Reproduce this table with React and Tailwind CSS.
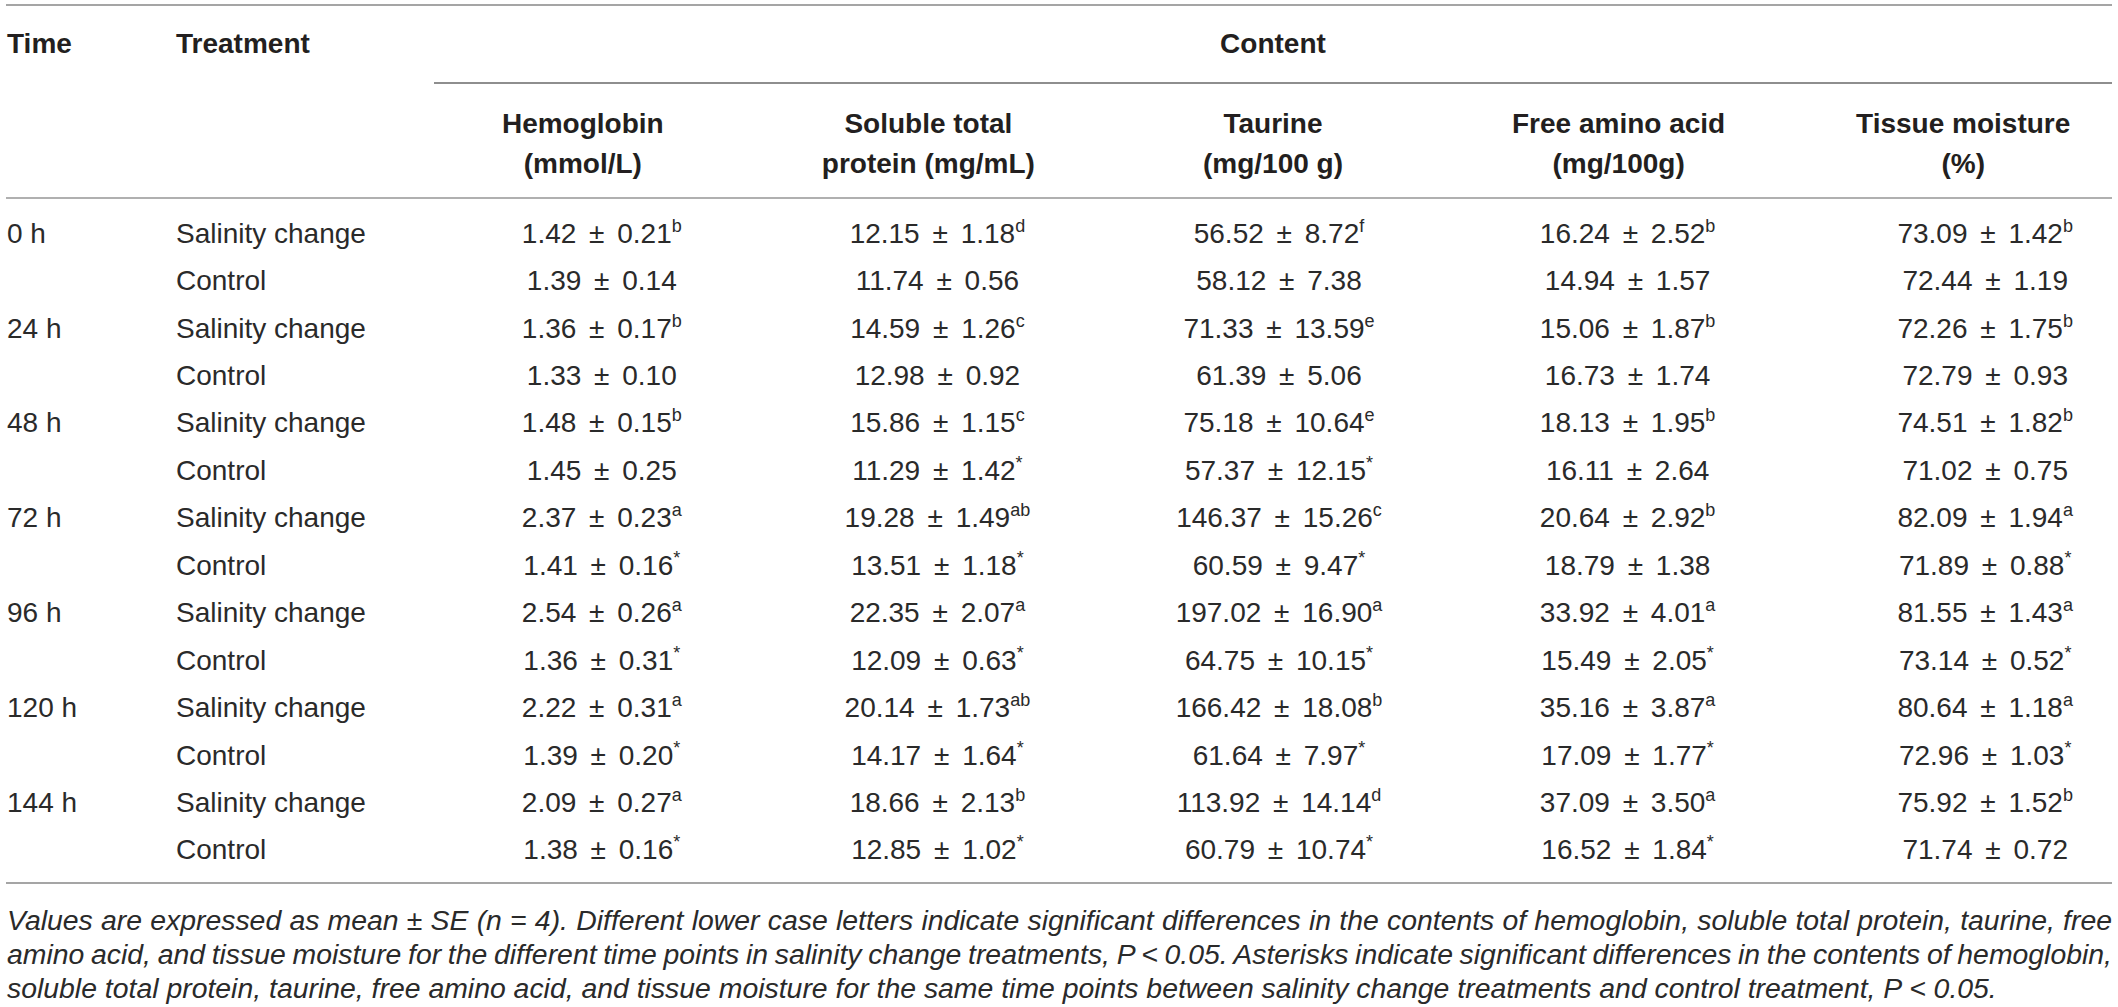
import React from 'react';

const heads = [
  ['Hemoglobin', '(mmol/L)'],
  ['Soluble total', 'protein (mg/mL)'],
  ['Taurine', '(mg/100 g)'],
  ['Free amino acid', '(mg/100g)'],
  ['Tissue moisture', '(%)'],
];

// header and data sit a little off the column centre in the source table
const headShift = ['pr-[38px]', 'pr-[18px]', '', 'pl-[20px]', 'pl-[38px]'];
const cellShift = ['', '', 'pl-[12px]', 'pl-[38px]', 'pl-[82px]'];

const rows = [
  ['0 h', 'Salinity change', '1.42 ± 0.21|b', '12.15 ± 1.18|d', '56.52 ± 8.72|f', '16.24 ± 2.52|b', '73.09 ± 1.42|b'],
  ['', 'Control', '1.39 ± 0.14', '11.74 ± 0.56', '58.12 ± 7.38', '14.94 ± 1.57', '72.44 ± 1.19'],
  ['24 h', 'Salinity change', '1.36 ± 0.17|b', '14.59 ± 1.26|c', '71.33 ± 13.59|e', '15.06 ± 1.87|b', '72.26 ± 1.75|b'],
  ['', 'Control', '1.33 ± 0.10', '12.98 ± 0.92', '61.39 ± 5.06', '16.73 ± 1.74', '72.79 ± 0.93'],
  ['48 h', 'Salinity change', '1.48 ± 0.15|b', '15.86 ± 1.15|c', '75.18 ± 10.64|e', '18.13 ± 1.95|b', '74.51 ± 1.82|b'],
  ['', 'Control', '1.45 ± 0.25', '11.29 ± 1.42|*', '57.37 ± 12.15|*', '16.11 ± 2.64', '71.02 ± 0.75'],
  ['72 h', 'Salinity change', '2.37 ± 0.23|a', '19.28 ± 1.49|ab', '146.37 ± 15.26|c', '20.64 ± 2.92|b', '82.09 ± 1.94|a'],
  ['', 'Control', '1.41 ± 0.16|*', '13.51 ± 1.18|*', '60.59 ± 9.47|*', '18.79 ± 1.38', '71.89 ± 0.88|*'],
  ['96 h', 'Salinity change', '2.54 ± 0.26|a', '22.35 ± 2.07|a', '197.02 ± 16.90|a', '33.92 ± 4.01|a', '81.55 ± 1.43|a'],
  ['', 'Control', '1.36 ± 0.31|*', '12.09 ± 0.63|*', '64.75 ± 10.15|*', '15.49 ± 2.05|*', '73.14 ± 0.52|*'],
  ['120 h', 'Salinity change', '2.22 ± 0.31|a', '20.14 ± 1.73|ab', '166.42 ± 18.08|b', '35.16 ± 3.87|a', '80.64 ± 1.18|a'],
  ['', 'Control', '1.39 ± 0.20|*', '14.17 ± 1.64|*', '61.64 ± 7.97|*', '17.09 ± 1.77|*', '72.96 ± 1.03|*'],
  ['144 h', 'Salinity change', '2.09 ± 0.27|a', '18.66 ± 2.13|b', '113.92 ± 14.14|d', '37.09 ± 3.50|a', '75.92 ± 1.52|b'],
  ['', 'Control', '1.38 ± 0.16|*', '12.85 ± 1.02|*', '60.79 ± 10.74|*', '16.52 ± 1.84|*', '71.74 ± 0.72'],
];

const grid = 'grid grid-cols-[170px_258px_repeat(5,minmax(0,1fr))]';

const Value = ({ text }) => {
  const [num, mark] = text.split('|');
  const [a, b] = num.split(' ± ');
  return (
    <span>
      {a} <span className="px-[5px]">±</span> {b}
      {mark && <sup className="text-[18px] -top-[11px]">{mark}</sup>}
    </span>
  );
};

export default function App() {
  return (
    <div className="w-[2118px] h-[1007px] bg-white px-[6px] font-['Liberation_Sans',Arial,sans-serif] text-[#231f20] overflow-hidden">
      <div className="h-[4px]" />
      <div className="h-[2px] bg-[#a5a5a5]" />

      {/* header */}
      <div className={`${grid} h-[76px] items-center text-[28px] font-bold`}>
        <div className="pl-[1px]">Time</div>
        <div>Treatment</div>
        <div className="col-span-5 text-center">Content</div>
      </div>
      <div className={grid}>
        <div className="col-start-3 col-span-5 h-[2px] bg-[#8e8e8e]" />
      </div>
      <div className={`${grid} h-[113px] pt-[20px] text-[28px] font-bold leading-[40px]`}>
        <div />
        <div />
        {heads.map((h, i) => (
          <div key={i} className={`text-center ${headShift[i]}`}>
            <div>{h[0]}</div>
            <div>{h[1]}</div>
          </div>
        ))}
      </div>
      <div className="h-[2px] bg-[#b0b0b0]" />

      {/* body */}
      <div className="pt-[11px] pb-[8px] text-[28px] text-[#2a2a2a]">
        {rows.map((r, i) => (
          <div key={i} className={`${grid} h-[47.45px] items-center`}>
            <div className="pl-[1px]">{r[0]}</div>
            <div>{r[1]}</div>
            {r.slice(2).map((v, j) => (
              <div key={j} className={`text-center whitespace-nowrap ${cellShift[j]}`}>
                <Value text={v} />
              </div>
            ))}
          </div>
        ))}
      </div>
      <div className="h-[2px] bg-[#a5a5a5]" />

      {/* footnote */}
      <div className="pt-[19px] pl-[1px] text-[28.4px] italic leading-[34px] text-[#2a2a2a]">
        <p className="text-justify [text-align-last:justify] whitespace-nowrap [word-spacing:-5px]">
          Values are expressed as mean ± SE (n = 4). Different lower case letters indicate significant differences in the contents of hemoglobin, soluble total protein, taurine, free
        </p>
        <p className="text-justify [text-align-last:justify] whitespace-nowrap [word-spacing:-5px]">
          amino acid, and tissue moisture for the different time points in salinity change treatments, P &lt; 0.05. Asterisks indicate significant differences in the contents of hemoglobin,
        </p>
        <p className="whitespace-nowrap">
          soluble total protein, taurine, free amino acid, and tissue moisture for the same time points between salinity change treatments and control treatment, P &lt; 0.05.
        </p>
      </div>
    </div>
  );
}
